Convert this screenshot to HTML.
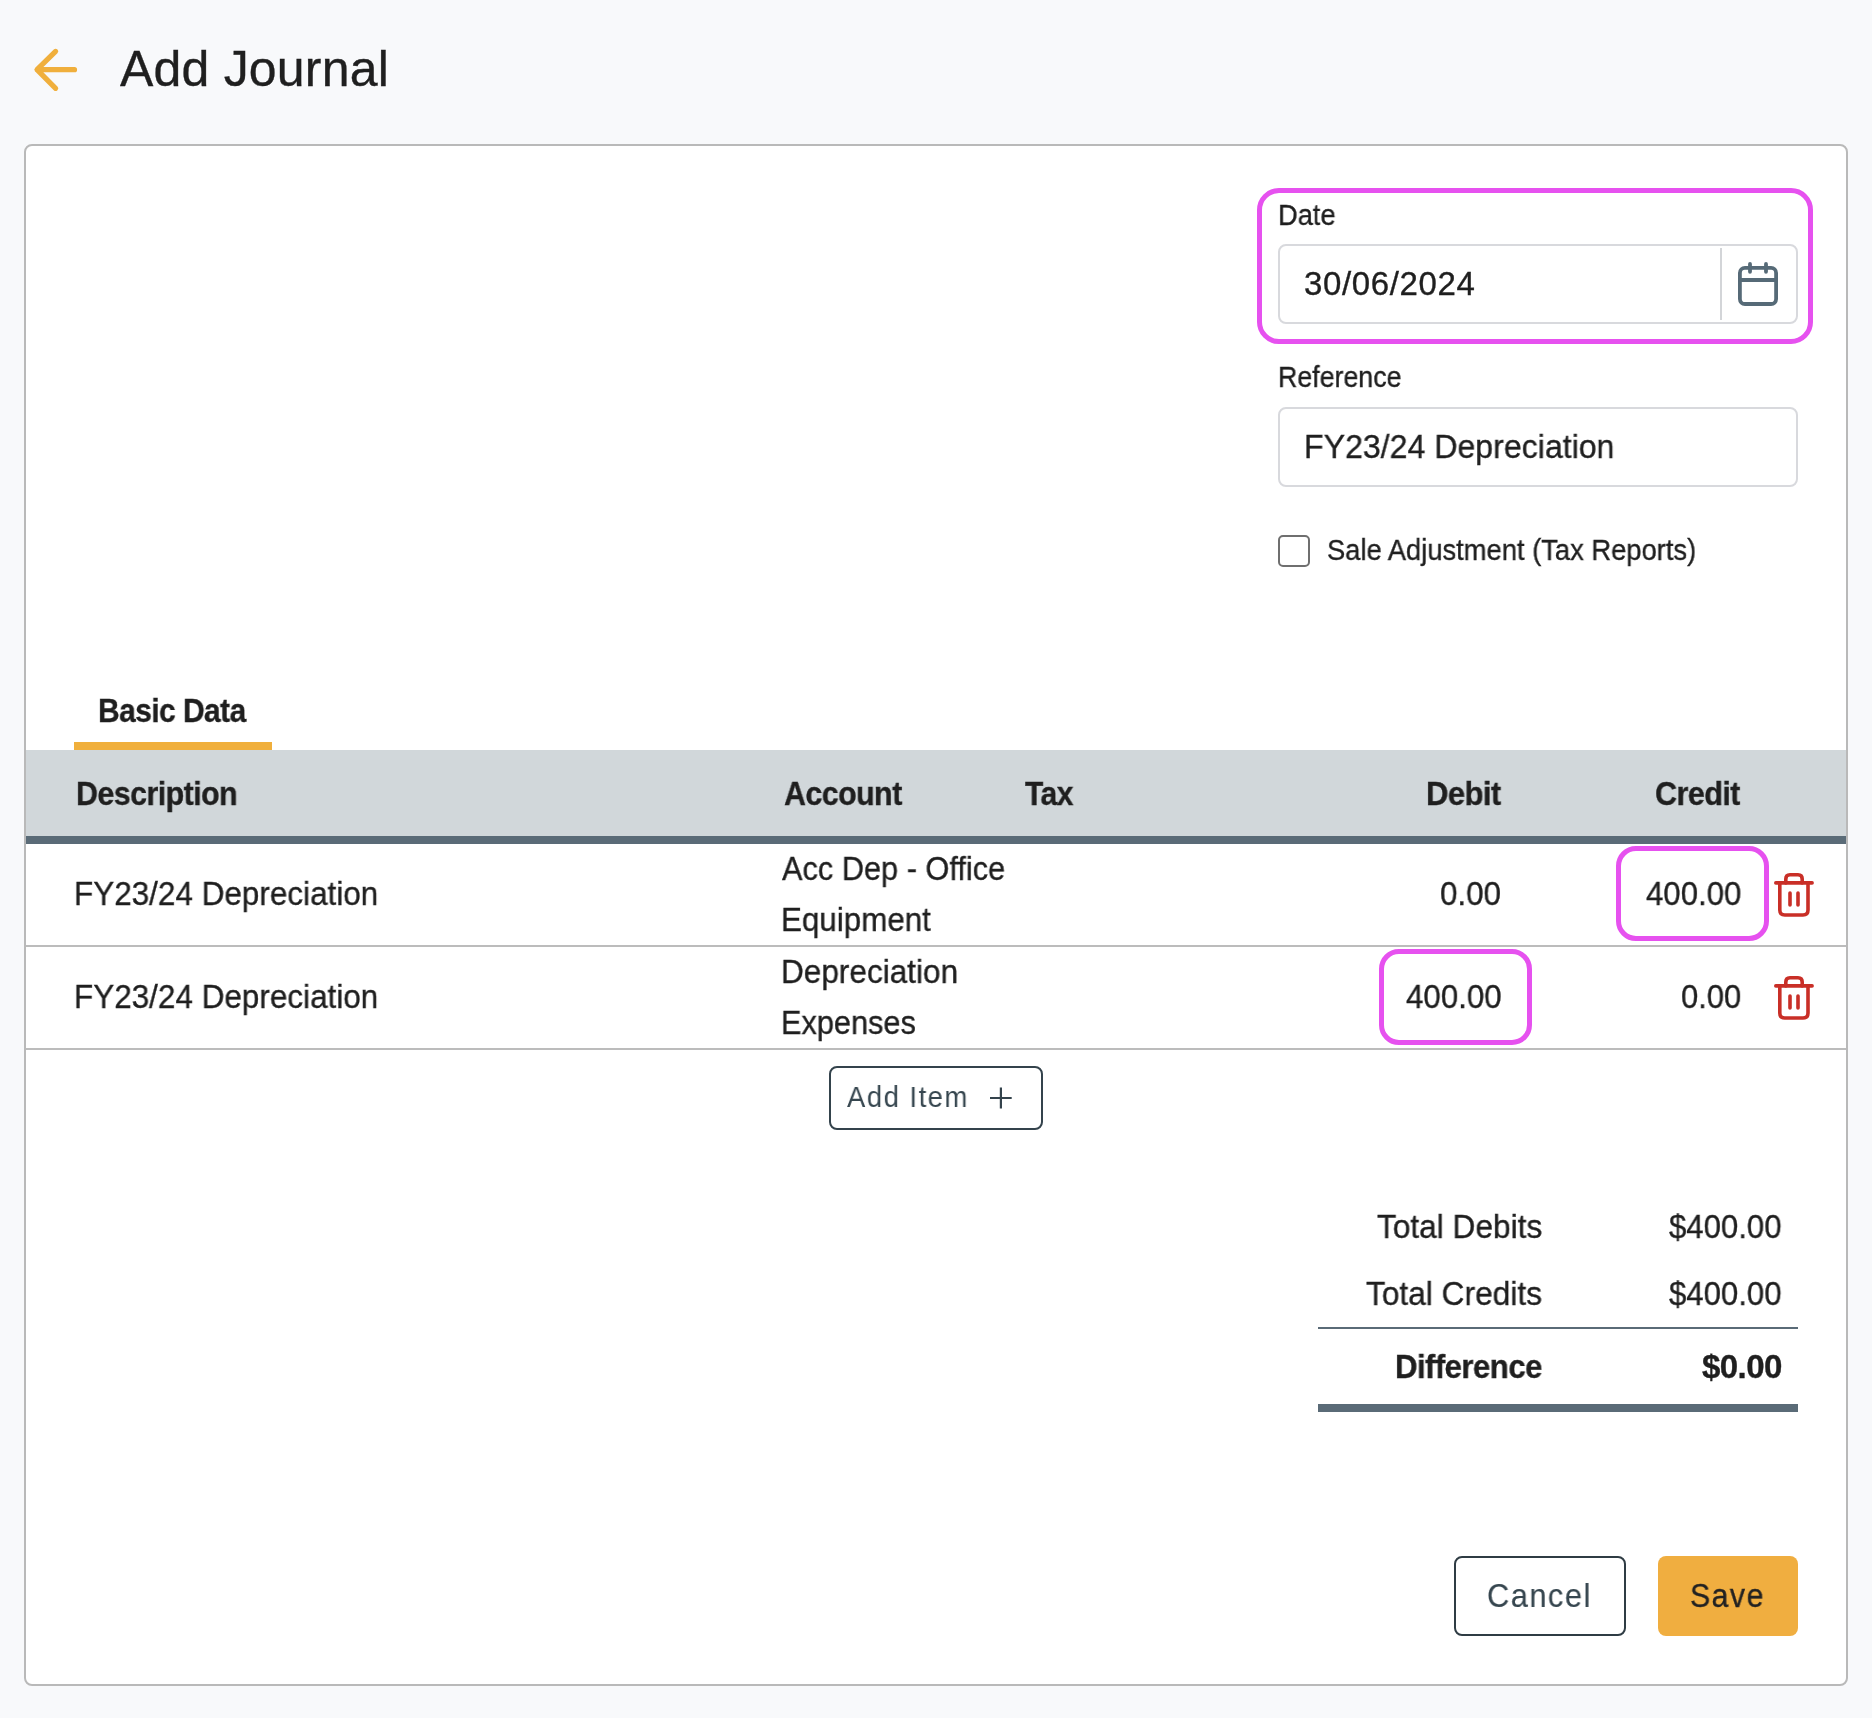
<!DOCTYPE html>
<html><head><meta charset="utf-8"><title>Add Journal</title>
<style>
html,body{margin:0;padding:0;}
body{width:1872px;height:1718px;background:#f8f9fb;position:relative;overflow:hidden;font-family:"Liberation Sans",sans-serif;}
.t{position:absolute;white-space:nowrap;will-change:transform;transform-origin:0 0;-webkit-text-stroke:0.35px currentColor;}
.abs{position:absolute;box-sizing:border-box;}
</style></head><body>
<!-- back arrow -->
<svg class="abs" style="left:0;top:0" width="120" height="130" viewBox="0 0 120 130">
  <path d="M74.5 69.7 H37.2 M55.6 51.4 L37 69.7 L55.6 88.3" fill="none" stroke="#f0af3c" stroke-width="5.2" stroke-linecap="round" stroke-linejoin="round"/>
</svg>
<!-- card -->
<div class="abs" style="left:24px;top:144px;width:1824px;height:1542px;background:#fff;border:2px solid #b9b9b9;border-radius:8px;"></div>
<!-- date input -->
<div class="abs" style="left:1278px;top:244px;width:520px;height:80px;border:2px solid #d8d9dd;border-radius:8px;background:#fff;"></div>
<div class="abs" style="left:1720px;top:248px;width:2px;height:72px;background:#d3d5d8;"></div>
<svg class="abs" style="left:1730px;top:256px" width="56" height="56" viewBox="0 0 56 56">
  <rect x="9.9" y="11.9" width="36.2" height="36.1" rx="5" ry="5" fill="none" stroke="#566a77" stroke-width="3.8"/>
  <path d="M9.9 24 H46.1 M20 8 V15.8 M36 8 V15.8" fill="none" stroke="#566a77" stroke-width="3.8" stroke-linecap="round"/>
</svg>
<!-- reference input -->
<div class="abs" style="left:1278px;top:407px;width:520px;height:80px;border:2px solid #d8d9dd;border-radius:8px;background:#fff;"></div>
<!-- checkbox -->
<div class="abs" style="left:1278px;top:535px;width:32px;height:32px;border:2px solid #6f6f6f;border-radius:5px;background:#fff;"></div>
<!-- tab underline -->
<div class="abs" style="left:74px;top:742px;width:198px;height:8px;background:#f0af3c;"></div>
<!-- table header -->
<div class="abs" style="left:26px;top:750px;width:1820px;height:86px;background:#d1d7da;"></div>
<div class="abs" style="left:26px;top:836px;width:1820px;height:8px;background:#5a6b77;"></div>
<!-- row dividers -->
<div class="abs" style="left:26px;top:945px;width:1820px;height:2px;background:#bcbcbc;"></div>
<div class="abs" style="left:26px;top:1048px;width:1820px;height:2px;background:#bcbcbc;"></div>
<!-- trash icons -->
<svg class="abs" style="left:1766px;top:866px" width="56" height="56" viewBox="0 0 56 56">
  <g fill="none" stroke="#c92f27" stroke-width="3.6" stroke-linecap="round" stroke-linejoin="round">
    <path d="M9.8 16.9 H46.1"/>
    <path d="M13.8 16.9 V44 Q13.8 49 18.8 49 H37 Q42 49 42 44 V16.9"/>
    <path d="M19.8 16.9 V13 Q19.8 8.8 24 8.8 H32 Q36.2 8.8 36.2 13 V16.9"/>
    <path d="M24 27 V39 M32 27 V39"/>
  </g>
</svg>
<svg class="abs" style="left:1766px;top:969px" width="56" height="56" viewBox="0 0 56 56">
  <g fill="none" stroke="#c92f27" stroke-width="3.6" stroke-linecap="round" stroke-linejoin="round">
    <path d="M9.8 16.9 H46.1"/>
    <path d="M13.8 16.9 V44 Q13.8 49 18.8 49 H37 Q42 49 42 44 V16.9"/>
    <path d="M19.8 16.9 V13 Q19.8 8.8 24 8.8 H32 Q36.2 8.8 36.2 13 V16.9"/>
    <path d="M24 27 V39 M32 27 V39"/>
  </g>
</svg>
<!-- add item button -->
<div class="abs" style="left:829px;top:1066px;width:214px;height:64px;border:2px solid #34434c;border-radius:8px;"></div>
<svg class="abs" style="left:980px;top:1078px" width="40" height="40" viewBox="0 0 40 40">
  <path d="M10 20 H31.7 M20.9 9.6 V30.4" fill="none" stroke="#34434c" stroke-width="2.2"/>
</svg>
<!-- totals lines -->
<div class="abs" style="left:1318px;top:1327px;width:480px;height:2px;background:#5a6b77;"></div>
<div class="abs" style="left:1318px;top:1404px;width:480px;height:8px;background:#5a6b77;"></div>
<!-- buttons -->
<div class="abs" style="left:1454px;top:1556px;width:172px;height:80px;border:2px solid #2f3c44;border-radius:8px;background:#fff;"></div>
<div class="abs" style="left:1658px;top:1556px;width:140px;height:80px;border-radius:8px;background:#f0ae40;"></div>
<!-- highlight boxes -->
<div class="abs" style="left:1257px;top:188px;width:556px;height:156px;border:5px solid #e651ef;border-radius:22px;"></div>
<div class="abs" style="left:1616px;top:846px;width:153px;height:95px;border:5px solid #e651ef;border-radius:20px;"></div>
<div class="abs" style="left:1379px;top:949px;width:153px;height:96px;border:5px solid #e651ef;border-radius:20px;"></div>
<div class="t" style="left:120.00px;top:44.00px;font-size:50px;line-height:50px;letter-spacing:0.200px;color:#1f1f1f;">Add Journal</div>
<div class="t" style="left:1277.84px;top:201.00px;font-size:29px;line-height:29px;letter-spacing:0.000px;color:#1f1f1f;transform:scaleX(0.9390);">Date</div>
<div class="t" style="left:1304.00px;top:267.00px;font-size:33px;line-height:33px;letter-spacing:0.622px;color:#1f1f1f;">30/06/2024</div>
<div class="t" style="left:1277.84px;top:363.00px;font-size:29px;line-height:29px;letter-spacing:0.000px;color:#1f1f1f;transform:scaleX(0.9224);">Reference</div>
<div class="t" style="left:1304.00px;top:430.00px;font-size:33px;line-height:33px;letter-spacing:0.000px;color:#1f1f1f;transform:scaleX(0.9726);">FY23/24 Depreciation</div>
<div class="t" style="left:1327.00px;top:536.00px;font-size:29px;line-height:29px;letter-spacing:0.000px;color:#1f1f1f;transform:scaleX(0.9425);">Sale Adjustment (Tax Reports)</div>
<div class="t" style="left:97.64px;top:694.00px;font-size:33px;line-height:33px;letter-spacing:-0.600px;color:#1f1f1f;font-weight:700;transform:scaleX(0.9074);">Basic Data</div>
<div class="t" style="left:76.20px;top:777.00px;font-size:33px;line-height:33px;letter-spacing:-0.600px;color:#1f1f1f;font-weight:700;transform:scaleX(0.9212);">Description</div>
<div class="t" style="left:783.50px;top:777.00px;font-size:33px;line-height:33px;letter-spacing:-0.600px;color:#1f1f1f;font-weight:700;transform:scaleX(0.9207);">Account</div>
<div class="t" style="left:1025.00px;top:777.00px;font-size:33px;line-height:33px;letter-spacing:-0.600px;color:#1f1f1f;font-weight:700;transform:scaleX(0.9119);">Tax</div>
<div class="t" style="left:1425.80px;top:777.00px;font-size:33px;line-height:33px;letter-spacing:-0.600px;color:#1f1f1f;font-weight:700;transform:scaleX(0.9400);">Debit</div>
<div class="t" style="left:1655.00px;top:777.00px;font-size:33px;line-height:33px;letter-spacing:-0.600px;color:#1f1f1f;font-weight:700;transform:scaleX(0.9254);">Credit</div>
<div class="t" style="left:74.00px;top:877.00px;font-size:33px;line-height:33px;letter-spacing:0.000px;color:#1f1f1f;transform:scaleX(0.9532);">FY23/24 Depreciation</div>
<div class="t" style="left:782.20px;top:852.00px;font-size:33px;line-height:33px;letter-spacing:0.000px;color:#1f1f1f;transform:scaleX(0.9313);">Acc Dep - Office</div>
<div class="t" style="left:781.00px;top:903.00px;font-size:33px;line-height:33px;letter-spacing:0.000px;color:#1f1f1f;transform:scaleX(0.9500);">Equipment</div>
<div class="t" style="left:1440.20px;top:877.00px;font-size:33px;line-height:33px;letter-spacing:0.000px;color:#1f1f1f;transform:scaleX(0.9516);">0.00</div>
<div class="t" style="left:1646.00px;top:877.00px;font-size:33px;line-height:33px;letter-spacing:0.000px;color:#1f1f1f;transform:scaleX(0.9451);">400.00</div>
<div class="t" style="left:74.00px;top:980.00px;font-size:33px;line-height:33px;letter-spacing:0.000px;color:#1f1f1f;transform:scaleX(0.9532);">FY23/24 Depreciation</div>
<div class="t" style="left:781.00px;top:955.00px;font-size:33px;line-height:33px;letter-spacing:0.000px;color:#1f1f1f;transform:scaleX(0.9556);">Depreciation</div>
<div class="t" style="left:781.00px;top:1006.00px;font-size:33px;line-height:33px;letter-spacing:0.000px;color:#1f1f1f;transform:scaleX(0.9307);">Expenses</div>
<div class="t" style="left:1406.00px;top:980.00px;font-size:33px;line-height:33px;letter-spacing:0.000px;color:#1f1f1f;transform:scaleX(0.9481);">400.00</div>
<div class="t" style="left:1681.40px;top:980.00px;font-size:33px;line-height:33px;letter-spacing:0.000px;color:#1f1f1f;transform:scaleX(0.9390);">0.00</div>
<div class="t" style="left:847.00px;top:1083.00px;font-size:29px;line-height:29px;letter-spacing:1.600px;color:#36464f;transform:scaleX(0.9462);-webkit-text-stroke:0;">Add Item</div>
<div class="t" style="left:1376.60px;top:1210.00px;font-size:33px;line-height:33px;letter-spacing:0.000px;color:#1f1f1f;transform:scaleX(0.9582);">Total Debits</div>
<div class="t" style="left:1669.40px;top:1210.00px;font-size:33px;line-height:33px;letter-spacing:0.000px;color:#1f1f1f;transform:scaleX(0.9433);">$400.00</div>
<div class="t" style="left:1365.80px;top:1277.00px;font-size:33px;line-height:33px;letter-spacing:0.000px;color:#1f1f1f;transform:scaleX(0.9594);">Total Credits</div>
<div class="t" style="left:1669.40px;top:1277.00px;font-size:33px;line-height:33px;letter-spacing:0.000px;color:#1f1f1f;transform:scaleX(0.9433);">$400.00</div>
<div class="t" style="left:1394.86px;top:1350.00px;font-size:33px;line-height:33px;letter-spacing:-0.600px;color:#1f1f1f;font-weight:700;transform:scaleX(0.9446);">Difference</div>
<div class="t" style="left:1702.00px;top:1350.00px;font-size:33px;line-height:33px;letter-spacing:-0.600px;color:#1f1f1f;font-weight:700;transform:scaleX(1.0017);">$0.00</div>
<div class="t" style="left:1487.20px;top:1579.00px;font-size:33px;line-height:33px;letter-spacing:1.600px;color:#36464f;transform:scaleX(0.9328);-webkit-text-stroke:0.15px currentColor;">Cancel</div>
<div class="t" style="left:1690.20px;top:1579.00px;font-size:33px;line-height:33px;letter-spacing:1.600px;color:#222222;transform:scaleX(0.9169);">Save</div>
</body></html>
